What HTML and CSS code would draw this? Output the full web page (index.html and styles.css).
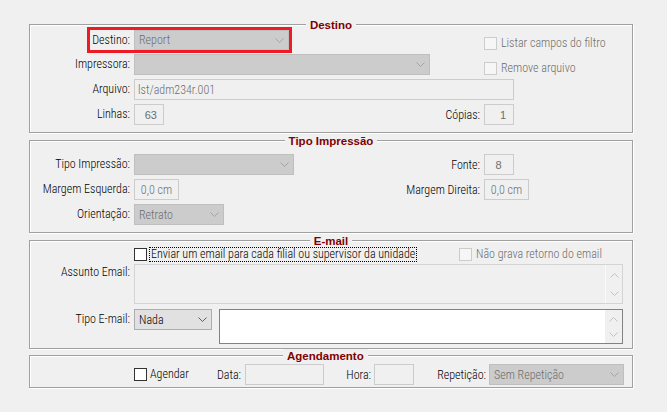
FILE: index.html
```html
<!DOCTYPE html>
<html lang="pt-BR">
<head>
    <meta charset="UTF-8">
    <meta name="viewport" content="width=device-width, initial-scale=1.0">
    <title>Parâmetros de Impressão</title>
    <link rel="stylesheet" href="styles.css">
</head>
<body>
    <div class="form">
        <!-- Destino -->
        <div class="group">
            <div class="group-title">Destino</div>
            <div class="grid body-destino">
                <div class="highlight">
                    <span class="hl-label">Destino:</span>
                    <div class="combo disabled combo-destino">Report<svg class="chev" viewBox="0 0 9 5"><path d="M.5.5l4 4 4-4"/></svg></div>
                </div>
                <div class="check disabled check-first"><span class="box"></span>Listar campos do filtro</div>

                <span class="lbl">Impressora:</span>
                <div class="combo disabled combo-impressora"><svg class="chev" viewBox="0 0 9 5"><path d="M.5.5l4 4 4-4"/></svg></div>
                <div class="check disabled check-second"><span class="box"></span>Remove arquivo</div>

                <span class="lbl">Arquivo:</span>
                <div class="edit edit-arquivo">lst/adm234r.001</div>

                <span class="lbl">Linhas:</span>
                <div class="split">
                    <div class="edit num num-linhas">63</div>
                    <span>Cópias:</span>
                </div>
                <div class="edit num num-copias">1</div>
            </div>
        </div>

        <!-- Tipo Impressão -->
        <div class="group">
            <div class="group-title">Tipo Impressão</div>
            <div class="grid body-tipo">
                <span class="lbl">Tipo Impressão:</span>
                <div class="split">
                    <div class="combo disabled combo-tipo"><svg class="chev" viewBox="0 0 9 5"><path d="M.5.5l4 4 4-4"/></svg></div>
                    <span>Fonte:</span>
                </div>
                <div class="edit num num-fonte">8</div>

                <span class="lbl">Margem Esquerda:</span>
                <div class="split">
                    <div class="edit edit-margem">0,0 cm</div>
                    <span>Margem Direita:</span>
                </div>
                <div class="edit edit-margem">0,0 cm</div>

                <span class="lbl">Orientação:</span>
                <div class="combo disabled combo-orientacao">Retrato<svg class="chev" viewBox="0 0 9 5"><path d="M.5.5l4 4 4-4"/></svg></div>
            </div>
        </div>

        <!-- E-mail -->
        <div class="group group-email">
            <div class="group-title">E-mail</div>
            <div class="body-email">
                <div class="row row-check">
                    <div class="check email-check"><span class="box"></span><span class="focus">Enviar um email para cada filial ou supervisor da unidade</span></div>
                    <div class="check disabled"><span class="box"></span>Não grava retorno do email</div>
                </div>
                <div class="row row-assunto">
                    <span class="lbl">Assunto Email:</span>
                    <div class="memo memo-assunto">
                        <div class="memo-text"></div>
                        <div class="scroll">
                            <svg class="arrow" viewBox="0 0 9 5"><path d="M.5 4.5l4-4 4 4"/></svg>
                            <svg class="arrow" viewBox="0 0 9 5"><path d="M.5.5l4 4 4-4"/></svg>
                        </div>
                    </div>
                </div>
                <div class="row row-tipo-email">
                    <span class="lbl lbl-tall">Tipo E-mail:</span>
                    <div class="combo combo-nada">Nada<svg class="chev" viewBox="0 0 9 5"><path d="M.5.5l4 4 4-4"/></svg></div>
                    <div class="memo memo-corpo">
                        <div class="memo-text"></div>
                        <div class="scroll">
                            <svg class="arrow" viewBox="0 0 9 5"><path d="M.5 4.5l4-4 4 4"/></svg>
                            <svg class="arrow" viewBox="0 0 9 5"><path d="M.5.5l4 4 4-4"/></svg>
                        </div>
                    </div>
                </div>
            </div>
        </div>

        <!-- Agendamento -->
        <div class="group">
            <div class="group-title title-agenda">Agendamento</div>
            <div class="row body-agenda">
                <div class="check agenda-check"><span class="box"></span>Agendar</div>
                <span class="lbl-inline lbl-data">Data:</span>
                <div class="edit edit-data"></div>
                <span class="lbl-inline lbl-hora">Hora:</span>
                <div class="edit edit-hora"></div>
                <span class="lbl-inline lbl-repeticao">Repetição:</span>
                <div class="combo disabled combo-repeticao">Sem Repetição<svg class="chev" viewBox="0 0 9 5"><path d="M.5.5l4 4 4-4"/></svg></div>
            </div>
        </div>
    </div>
</body>
</html>
```

FILE: styles.css
```css
/* base */
body {
    margin: 0;
    background-color: #f0f0f0;
    font-family: Roboto, "Liberation Sans", sans-serif;
    font-stretch: 81%;
    font-weight: 350;
    font-size: 12px;
    color: #000;
}

.form {
    width: 604px;
    padding: 24px 0 0 29px;
}

/* group boxes */
.group {
    border: 1px solid #a0a0a0;
    box-shadow: inset 1px 1px 0 #fff, 1px 1px 0 #fff;
    margin-bottom: 7px;
}

.group-email {
    margin-bottom: 6px;
}

.group-title {
    display: table;
    margin: -7px auto 0;
    padding: 0 4px;
    background-color: #f0f0f0;
    font-family: "Liberation Sans", Arial, sans-serif;
    font-stretch: normal;
    font-weight: bold;
    font-size: 11.5px;
    line-height: 14px;
    color: #800000;
}

.title-agenda {
    margin-left: 253px;
}

/* grid layout */
.grid {
    display: grid;
    grid-template-columns: 100px 346px 1fr;
    column-gap: 4px;
    row-gap: 4px;
    align-items: center;
    justify-items: start;
}

.body-destino {
    margin-top: -5px;
    padding-bottom: 7px;
}

.body-tipo {
    margin-top: 6px;
    padding-bottom: 7px;
}

.lbl {
    justify-self: stretch;
    text-align: right;
    white-space: nowrap;
    line-height: 15px;
}

.split {
    justify-self: stretch;
    display: flex;
    justify-content: space-between;
    align-items: center;
    white-space: nowrap;
}

/* red highlight */
.highlight {
    grid-column: 1 / 3;
    display: flex;
    align-items: center;
    margin-left: 57px;
    margin-bottom: -3px;
    border: 3px solid #ed1c24;
}

.hl-label {
    width: 40px;
    margin-right: 4px;
    text-align: right;
    white-space: nowrap;
}

/* combos */
.combo {
    display: flex;
    align-items: center;
    box-sizing: border-box;
    height: 21px;
    padding-left: 4px;
    border: 1px solid #adadad;
    background-color: #e1e1e1;
    color: #000;
    white-space: nowrap;
}

.combo.disabled {
    border-color: #bfbfbf;
    background-color: #cccccc;
    color: #6d6d6d;
}

.chev {
    width: 9px;
    height: 5px;
    margin-left: auto;
    margin-right: 4px;
    fill: none;
    stroke: #5f5f5f;
    stroke-width: 1;
}

.combo.disabled .chev {
    stroke: #a3a3a3;
}

.combo-destino { width: 155px; height: 20px; }
.combo-impressora { width: 296px; }
.combo-tipo { width: 160px; }
.combo-orientacao { width: 90px; }
.combo-nada { width: 78px; flex: none; }
.combo-repeticao { width: 135px; }

/* edits */
.edit {
    display: flex;
    align-items: center;
    box-sizing: border-box;
    height: 21px;
    padding-left: 3px;
    border: 1px solid #cccccc;
    background-color: #f0f0f0;
    color: #6d6d6d;
    white-space: nowrap;
}

.edit.num {
    font-family: "Liberation Sans", Arial, sans-serif;
    font-stretch: normal;
    font-weight: normal;
    font-size: 11px;
    width: 30px;
    justify-content: flex-end;
    padding-right: 6px;
}

.edit.num-copias { padding-right: 7px; }
.edit.num-fonte { justify-content: center; padding: 0 1px 0 0; }

.edit-arquivo {
    grid-column: 2 / 4;
    width: 380px;
}

.edit-margem {
    width: 45px;
    padding: 0;
    justify-content: center;
}

.edit-data { width: 79px; }
.edit-hora { width: 40px; }

/* checkboxes */
.check {
    display: flex;
    align-items: center;
    height: 13px;
    line-height: 13px;
    white-space: nowrap;
}

.check .box {
    flex: none;
    box-sizing: border-box;
    width: 13px;
    height: 13px;
    margin-right: 4px;
    border: 1px solid #333333;
    background-color: #fff;
}

.check.disabled {
    color: #6d6d6d;
}

.check.disabled .box {
    border-color: #cccccc;
    background-color: #f6f6f6;
}

.check-first {
    align-self: start;
    margin-top: 10px;
}

.check-second {
    align-self: start;
    margin-top: 8px;
}

/* e-mail block */
.body-email {
    margin-top: -1px;
    padding-bottom: 4px;
}

.row {
    display: flex;
}

.row .lbl {
    flex: none;
    width: 100px;
    margin-right: 4px;
}

.row-check {
    align-items: center;
    height: 15px;
    margin-left: 104px;
}

.email-check {
    width: 325px;
}

.email-check .box {
    margin-right: 2px;
}

.focus {
    padding: 0 1px;
    border: 1px dotted #000;
}

.row-assunto {
    align-items: flex-start;
    margin-top: 2px;
}

.row-assunto .lbl {
    margin-top: 1px;
}

.row-tipo-email {
    align-items: flex-start;
    margin-top: 5px;
}

.lbl-tall {
    line-height: 21px;
}

.memo {
    display: flex;
    box-sizing: border-box;
    border: 1px solid #d4d4d4;
    background-color: #f0f0f0;
}

.memo-text {
    flex: 1;
}

.memo-assunto {
    width: 489px;
    height: 40px;
}

.memo-corpo {
    width: 404px;
    height: 35px;
    margin-left: 7px;
    border-color: #828282;
    background-color: #fff;
}

.scroll {
    display: flex;
    flex-direction: column;
    justify-content: space-between;
    align-items: center;
    box-sizing: border-box;
    width: 17px;
    padding: 8px 0 7px;
    background-color: #f0f0f0;
}

.memo-assunto .scroll {
    border-left: 1px solid #fafafa;
}

.memo-corpo .scroll {
    padding: 7px 0 6px;
}

.arrow {
    width: 9px;
    height: 5px;
    fill: none;
    stroke: #c2c2c2;
    stroke-width: 1;
}

/* agendamento */
.body-agenda {
    align-items: center;
    height: 21px;
    margin: 1px 0 0 104px;
    padding-bottom: 2px;
}

.agenda-check {
    width: 81px;
}

.agenda-check .box {
    margin-right: 3px;
}

.lbl-inline {
    text-align: right;
    white-space: nowrap;
}

.lbl-data { width: 26px; margin-right: 4px; }
.lbl-hora { width: 47px; margin-right: 3px; }
.lbl-repeticao { width: 72px; margin-right: 3px; }
```
